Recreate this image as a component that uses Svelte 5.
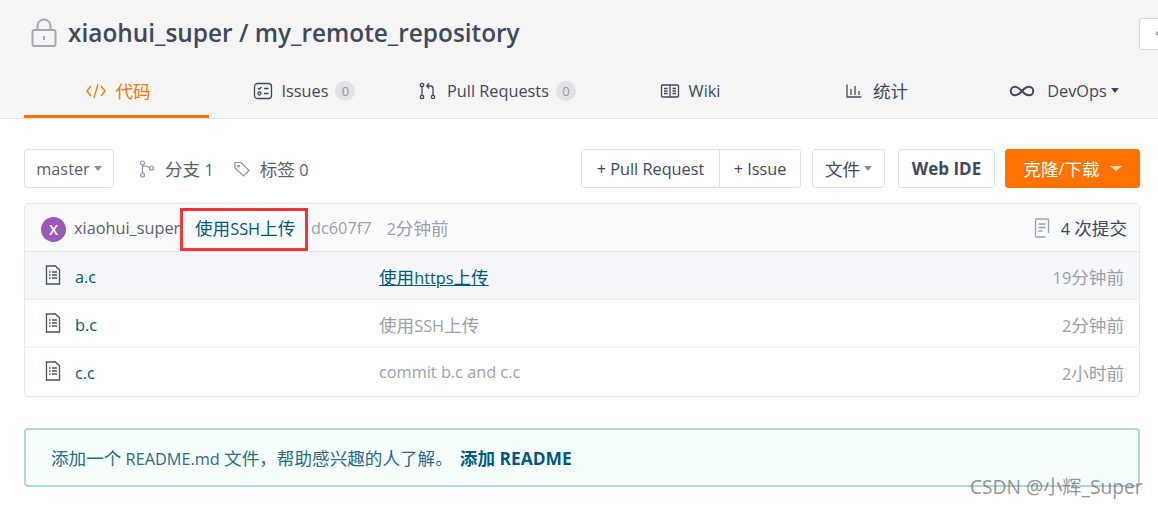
<script>
  const tabs = [
    { label: '代码', icon: 'code', active: true },
    { label: 'Issues', icon: 'issues', count: 0 },
    { label: 'Pull Requests', icon: 'pr', count: 0 },
    { label: 'Wiki', icon: 'wiki' },
    { label: '统计', icon: 'chart' },
    { label: 'DevOps', icon: 'infinity', caret: true }
  ]
  const files = [
    { name: 'a.c', message: '使用https上传', time: '19分钟前', hover: true },
    { name: 'b.c', message: '使用SSH上传', time: '2分钟前' },
    { name: 'c.c', message: 'commit b.c and c.c', time: '2小时前' }
  ]

  // Chinese runs sit a bit larger than the latin text around them
  function runs(text) {
    return text.split(/([\u3000-\u9fff\uff00-\uffef]+)/).filter(Boolean).map((part) => ({
      part,
      cjk: /[\u3000-\u9fff\uff00-\uffef]/.test(part)
    }))
  }
</script>

{#snippet mixed(text)}{#each runs(text) as r}<span class:cjk={r.cjk}>{r.part}</span>{/each}{/snippet}

<div class="page">
  <header class="head">
    <div class="title-row">
      <svg class="lock" width="28" height="30" viewBox="0 0 28 30" fill="none" stroke="#a5a9b8" stroke-width="2">
        <rect x="2.500" y="12" width="23" height="16" rx="2" />
        <path d="M7.500 12V8a6.500 6.500 0 0 1 13 0v4" />
        <path d="M14 18v4" />
      </svg>
      <h1>xiaohui_super / my_remote_repository</h1>
      <div class="cut-btn"><span class="chev"></span></div>
    </div>
    <nav class="tabs">
      {#each tabs as tab}
        <div class="tab" class:active={tab.active}>
          {#if tab.icon === 'infinity'}
            <svg class="tab-icon wide" width="26" height="18" viewBox="0 0 26 18" fill="none" stroke="currentColor" stroke-width="2">
              <path d="M13 9c-2.600-3-4.500-4.200-7-4.200a4.200 4.200 0 0 0 0 8.400c2.500 0 4.400-1.200 7-4.200 2.600-3 4.500-4.200 7-4.200a4.200 4.200 0 0 1 0 8.400c-2.500 0-4.400-1.200-7-4.200z" />
            </svg>
          {:else}
            <svg class="tab-icon" width="20" height="18" viewBox="0 0 20 18" fill="none" stroke="currentColor" stroke-width="1.300">
              {#if tab.icon === 'code'}
                <path d="M5 4 1 9l4 5M15 4l4 5-4 5M12 2 8 16" />
              {:else if tab.icon === 'issues'}
                <rect x="1.500" y="1.500" width="17" height="15" rx="3" />
                <path d="M5 6l1.300 1.300L8.500 5M11 6.500h4.500M11 11.500h4.500" />
                <circle cx="6.500" cy="11.500" r="1.500" />
              {:else if tab.icon === 'pr'}
                <circle cx="4" cy="3" r="1.700" /><circle cx="4" cy="15" r="1.700" /><circle cx="15" cy="15" r="1.700" />
                <path d="M4 5v8M15 13V6.500a2.500 2.500 0 0 0-2.500-2.500H9M11 1.500 8.700 4 11 6.500" />
              {:else if tab.icon === 'wiki'}
                <rect x="1.500" y="3" width="17" height="12" rx="1" />
                <path d="M10 3v12M4 6.500h3.500M4 9h3.500M4 11.500h3.500M12.500 6.500H16M12.500 9H16M12.500 11.500H16" />
              {:else}
                <path d="M3 2.500v12.500h14.500M7 7v6M11 4v9M15 9v4" />
              {/if}
            </svg>
          {/if}
          <span class="tab-label">{@render mixed(tab.label)}</span>
          {#if tab.count !== undefined}<span class="badge">{tab.count}</span>{/if}
          {#if tab.caret}<span class="caret dark"></span>{/if}
        </div>
      {/each}
    </nav>
  </header>

  <main class="main">
    <div class="toolbar">
      <div class="btn master">master<span class="caret"></span></div>
      <span class="stat">
        <svg width="16" height="18" viewBox="0 0 16 18" fill="none" stroke="#8c92a4" stroke-width="1.200">
          <circle cx="3.500" cy="3" r="2" /><circle cx="3.500" cy="15" r="2" /><circle cx="12.500" cy="8" r="2" />
          <path d="M3.500 5v8M3.500 5c0 2 7 1 7 3" />
        </svg>
        <span>{@render mixed('分支 1')}</span>
      </span>
      <span class="stat">
        <svg width="16" height="16" viewBox="0 0 16 16" fill="none" stroke="#8c92a4" stroke-width="1.200">
          <path d="M1 1.500h6l8 8-5.500 5.500-8.500-8z" /><circle cx="4.500" cy="5" r="1" />
        </svg>
        <span>{@render mixed('标签 0')}</span>
      </span>
      <div class="spacer"></div>
      <div class="btn-group">
        <div class="btn pr">+ Pull Request</div>
        <div class="btn iss">+ Issue</div>
      </div>
      <div class="btn file">{@render mixed('文件')}<span class="caret"></span></div>
      <div class="btn ide">Web IDE</div>
      <div class="btn clone">{@render mixed('克隆/下载')}<span class="caret white"></span></div>
    </div>

    <section class="box">
      <div class="commit">
        <span class="avatar">X</span>
        <span class="author">xiaohui_super</span>
        <span class="commit-msg">{@render mixed('使用SSH上传')}</span>
        <span class="muted sha">dc607f7</span>
        <span class="muted">{@render mixed('2分钟前')}</span>
        <div class="spacer"></div>
        <svg width="18" height="20" viewBox="0 0 18 20" fill="none" stroke="#9aa1b2" stroke-width="1.300">
          <path d="M15.500 15V2a1 1 0 0 0-1-1h-11a1 1 0 0 0-1 1v16a1 1 0 0 0 1 1h9M5.500 6h7M5.500 9.500h7M5.500 13h4" />
        </svg>
        <span class="commits">{@render mixed('4 次提交')}</span>
      </div>
      {#each files as file}
        <div class="row" class:hover={file.hover}>
          <svg class="file-icon" width="16" height="20" viewBox="0 0 16 20" fill="none" stroke="#4a4f65" stroke-width="1.300">
            <path d="M1.500 1h9l4 4v14h-13z" />
            <path d="M4 7h1.500M7 7h5M4 10h1.500M7 10h5M4 13h1.500M7 13h5" />
          </svg>
          <span class="name">{file.name}</span>
          <span class="message" class:link={file.hover}>{@render mixed(file.message)}</span>
          <span class="time">{@render mixed(file.time)}</span>
        </div>
      {/each}
    </section>

    <div class="alert">
      <span>{@render mixed('添加一个 README.md 文件，帮助感兴趣的人了解。')}</span>
      <b>{@render mixed('添加 README')}</b>
    </div>
  </main>

  <div class="redbox"></div>
  <div class="mark">CSDN @小辉_Super</div>
</div>

<style>
  :global(body) {
    margin: 0;
    background: #fff;
  }
  .page {
    position: relative;
    width: 1158px;
    height: 508px;
    overflow: hidden;
    font-family: "Open Sans", "Noto Sans CJK SC", sans-serif;
    font-size: 16.300px;
    color: #40485b;
  }
  .cjk {
    font-size: 17.600px;
  }
  .head {
    height: 118px;
    background: #f5f5f5;
    border-bottom: 1px solid #e3e3e3;
    padding-left: 24px;
  }
  .title-row {
    height: 66px;
    display: flex;
    align-items: center;
    position: relative;
  }
  .lock {
    margin: 0 10px 0 6px;
  }
  h1 {
    margin: 0 0 2px;
    font-size: 24.400px;
    font-weight: 600;
    color: #40485b;
    white-space: nowrap;
  }
  .cut-btn {
    position: absolute;
    left: 1115px;
    top: 18px;
    width: 40px;
    height: 30px;
    background: #fff;
    border: 1px solid #d3d6de;
    border-radius: 3px;
  }
  .chev {
    position: absolute;
    left: 17px;
    top: 11px;
    width: 6px;
    height: 6px;
    border-left: 1px solid #777;
    border-bottom: 1px solid #777;
    transform: rotate(45deg);
  }
  .tabs {
    display: grid;
    grid-template-columns: 185px 190px 196px 190px 182px 194px;
    height: 52px;
  }
  .tab {
    display: flex;
    align-items: center;
    justify-content: center;
    height: 49px;
    padding-bottom: 3px;
    color: #40485b;
  }
  .tab.active {
    color: #fe7300;
    border-bottom: 3px solid #fe7300;
    padding-bottom: 0;
    padding-left: 4px;
  }
  .tab-icon {
    margin-right: 9px;
    flex: none;
  }
  .tab-icon.wide {
    margin-right: 12px;
  }
  .badge {
    width: 20px;
    height: 20px;
    border-radius: 50%;
    background: #e0e2e7;
    color: #8c92a4;
    font-size: 13px;
    line-height: 20px;
    text-align: center;
    margin-left: 7px;
  }
  .caret {
    display: inline-block;
    width: 0;
    height: 0;
    margin-left: 4px;
    border-left: 4px solid transparent;
    border-right: 4px solid transparent;
    border-top: 5px solid #8c8f99;
  }
  .caret.dark {
    border-top-color: #40485b;
  }
  .caret.white {
    border-top-color: #fff;
    margin-left: 10px;
    border-left-width: 6px;
    border-right-width: 6px;
    opacity: 0.8;
  }
  .main {
    padding: 30px 18px 0 24px;
  }
  .toolbar {
    display: flex;
    align-items: center;
    height: 39px;
  }
  .btn {
    height: 39px;
    box-sizing: border-box;
    border: 1px solid #dfe3e9;
    border-radius: 3px;
    background: #fff;
    display: flex;
    align-items: center;
    justify-content: center;
    white-space: nowrap;
    color: #40485b;
  }
  .master {
    width: 90px;
    margin-right: 25px;
    color: #5a5f70;
  }
  .stat {
    display: flex;
    align-items: center;
    gap: 10px;
    margin-right: 20px;
    color: #5a5f70;
  }
  .spacer {
    flex: 1;
  }
  .btn-group {
    display: flex;
    margin-right: 11px;
  }
  .pr {
    width: 139px;
    border-radius: 3px 0 0 3px;
  }
  .iss {
    width: 82px;
    margin-left: -1px;
    border-radius: 0 3px 3px 0;
  }
  .file {
    width: 73px;
    margin-right: 13px;
  }
  .ide {
    width: 97px;
    margin-right: 10px;
    font-weight: 700;
    font-size: 17px;
  }
  .clone {
    width: 135px;
    background: #fe7300;
    border-color: #fe7300;
    color: #fff;
  }
  .box {
    margin-top: 15px;
    border: 1px solid #e3e9ed;
    border-radius: 4px;
    overflow: hidden;
  }
  .commit {
    height: 48px;
    box-sizing: border-box;
    background: #fafbfc;
    border-bottom: 1px solid #dce3e8;
    display: flex;
    align-items: center;
    padding: 0 12px 0 16px;
  }
  .avatar {
    width: 25px;
    height: 25px;
    border-radius: 50%;
    background: #9b59b6;
    color: #fff;
    font-size: 14px;
    font-weight: 600;
    line-height: 25px;
    text-align: center;
    margin-right: 8px;
    margin-top: 3px;
    flex: none;
  }
  .author {
    color: #5a5f70;
    width: 121px;
    white-space: nowrap;
  }
  .commit-msg {
    color: #005980;
    width: 116px;
    white-space: nowrap;
  }
  .muted {
    color: #9b9fab;
  }
  .sha {
    margin-right: 15px;
  }
  .commits {
    margin-left: 10px;
    color: #40485b;
  }
  .row {
    height: 48px;
    box-sizing: border-box;
    display: flex;
    align-items: center;
    padding: 1px 15px 0 20px;
    border-bottom: 1px solid #eef0f2;
  }
  .row:last-child {
    border-bottom-color: transparent;
  }
  .row.hover {
    background: #f5f7fa;
  }
  .file-icon {
    margin-right: 14px;
    margin-bottom: 2px;
    flex: none;
  }
  .name {
    width: 304px;
    color: #005980;
    margin-top: 2px;
  }
  .message {
    flex: 1;
    color: #9b9fab;
  }
  .message.link {
    color: #005980;
    text-decoration: underline;
  }
  .time {
    color: #9b9fab;
  }
  .alert {
    margin-top: 31px;
    height: 59px;
    box-sizing: border-box;
    border: 2px solid #aed8e3;
    border-radius: 4px;
    background: #f6fffe;
    padding-left: 25px;
    display: flex;
    align-items: center;
    color: #2b6a85;
  }
  .alert b {
    color: #005980;
    margin-left: 7px;
    font-size: 17.400px;
  }
  /* annotation and watermark drawn on top of the screenshot */
  .redbox {
    position: absolute;
    left: 180px;
    top: 208px;
    width: 128px;
    height: 43px;
    box-sizing: border-box;
    border: 3px solid #f83434;
  }
  .mark {
    position: absolute;
    left: 970px;
    top: 472px;
    font-size: 19.200px;
    color: rgba(100, 100, 100, 0.7);
    white-space: nowrap;
  }
</style>
